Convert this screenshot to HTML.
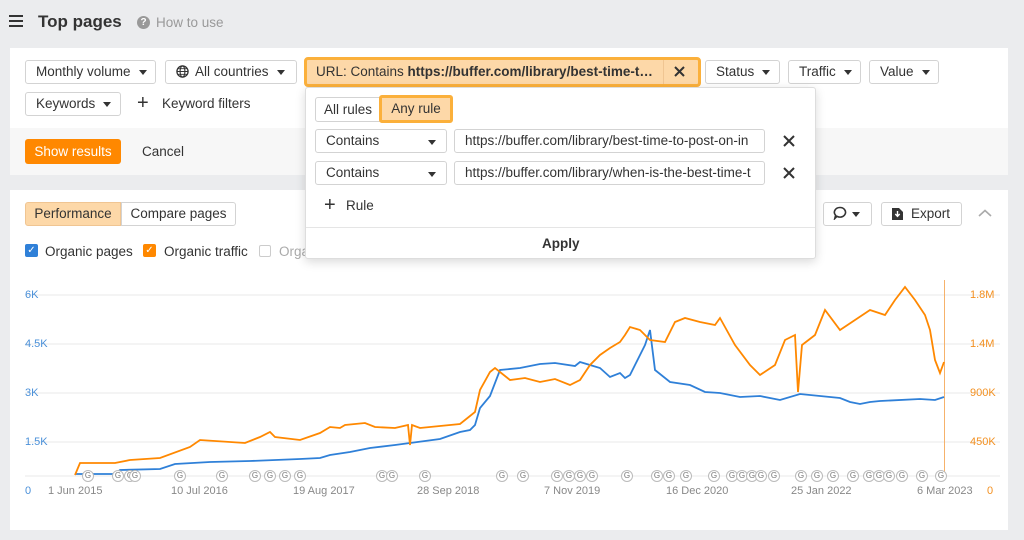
<!DOCTYPE html>
<html><head><meta charset="utf-8"><style>
*{box-sizing:border-box;margin:0;padding:0}
body{width:1024px;height:540px;background:#ebecee;font-family:"Liberation Sans",sans-serif;color:#333;position:relative;overflow:hidden;font-size:13px}
.a{position:absolute}
.btn{position:absolute;height:24px;border:1px solid #d3d3d3;border-radius:3px;background:#fff;font-size:13.5px;line-height:22px;padding-left:10px;color:#333}
.car{display:inline-block;width:0;height:0;border-left:4px solid transparent;border-right:4px solid transparent;border-top:5px solid #333;vertical-align:middle;margin-left:8px}
.g{position:absolute;top:470px;width:12px;height:12px;border:1px solid #bbb;border-radius:50%;background:#fff;font-size:8px;line-height:10px;text-align:center;color:#777}
.yl{position:absolute;font-size:11px;color:#4a90d9}
.yr{position:absolute;font-size:11px;color:#f39020}
.xl{position:absolute;top:485px;font-size:11px;color:#888}
.x{position:absolute}
</style></head><body>
<div class="a" style="left:9px;top:15px;width:14px;height:2px;background:#333;box-shadow:0 5px 0 #333,0 10px 0 #333"></div>
<div class="a" style="left:38px;top:12px;font-size:17px;font-weight:bold;color:#333">Top pages</div>
<div class="a" style="left:137px;top:16px;width:13px;height:13px;border-radius:50%;background:#999;color:#fff;font-size:10px;font-weight:bold;text-align:center;line-height:13px">?</div>
<div class="a" style="left:156px;top:15px;font-size:13.5px;color:#999">How to use</div>

<div class="a" style="left:10px;top:48px;width:998px;height:127px;background:#fff"></div>
<div class="a" style="left:10px;top:128px;width:998px;height:47px;background:#f7f7f7"></div>
<div class="btn" style="left:25px;top:60px;width:131px">Monthly volume<span class="car"></span></div>
<div class="btn" style="left:165px;top:60px;width:132px;padding-left:10px"><svg width="13" height="13" viewBox="0 0 14 14" style="vertical-align:-2px;margin-right:6px"><circle cx="7" cy="7" r="6" fill="none" stroke="#333" stroke-width="1.4"/><ellipse cx="7" cy="7" rx="2.6" ry="6" fill="none" stroke="#333" stroke-width="1.2"/><path d="M1 7h12M2 4h10M2 10h10" stroke="#333" stroke-width="1"/></svg>All countries<span class="car"></span></div>
<div class="a" style="left:304px;top:57px;width:397px;height:30px;border:3px solid #fbb03b;border-radius:4px;background:#fdd8a8"></div>
<div class="a" style="left:316px;top:64px;font-size:13.5px;white-space:nowrap">URL: Contains <b>https://buffer.com/library/best-time-t…</b></div>
<div class="a" style="left:663px;top:60px;width:1px;height:24px;background:#f0c592"></div>
<svg class="x" style="left:674px;top:66px" width="11" height="11"><path d="M1 1L10 10M10 1L1 10" stroke="#333" stroke-width="2"/></svg>
<div class="btn" style="left:705px;top:60px;width:75px">Status<span class="car"></span></div>
<div class="btn" style="left:788px;top:60px;width:73px">Traffic<span class="car"></span></div>
<div class="btn" style="left:869px;top:60px;width:70px">Value<span class="car"></span></div>
<div class="btn" style="left:25px;top:92px;width:96px">Keywords<span class="car"></span></div>
<div class="a" style="left:137px;top:92px;font-size:20px;line-height:22px">+</div>
<div class="a" style="left:162px;top:96px;font-size:13.5px">Keyword filters</div>
<div class="a" style="left:25px;top:139px;width:96px;height:25px;background:#ff8800;border-radius:3px;color:#fff;font-size:13.5px;line-height:25px;text-align:center">Show results</div>
<div class="a" style="left:142px;top:144px;font-size:13.5px">Cancel</div>

<div class="a" style="left:10px;top:190px;width:998px;height:340px;background:#fff"></div>
<div class="a" style="left:25px;top:202px;width:96px;height:24px;background:#fdd8a8;border:1px solid #f0c592;border-radius:3px 0 0 3px;font-size:13.5px;line-height:22px;text-align:center">Performance</div>
<div class="a" style="left:121px;top:202px;width:115px;height:24px;background:#fff;border:1px solid #d3d3d3;border-radius:0 3px 3px 0;font-size:13.5px;line-height:22px;text-align:center">Compare pages</div>
<div class="a" style="left:25px;top:244px;width:13px;height:13px;background:#2f80d8;border-radius:2px;color:#fff;font-size:10px;text-align:center;line-height:13px">✓</div>
<div class="a" style="left:45px;top:244px;font-size:13.5px">Organic pages</div>
<div class="a" style="left:143px;top:244px;width:13px;height:13px;background:#ff8800;border-radius:2px;color:#fff;font-size:10px;text-align:center;line-height:13px">✓</div>
<div class="a" style="left:164px;top:244px;font-size:13.5px">Organic traffic</div>
<div class="a" style="left:259px;top:245px;width:12px;height:12px;border:1px solid #ccc;border-radius:2px"></div>
<div class="a" style="left:279px;top:244px;font-size:13.5px;color:#aaa">Orga</div>
<div class="btn" style="left:823px;top:202px;width:49px;padding-left:9px"><svg width="14" height="14" viewBox="0 0 14 14" style="vertical-align:-2px"><path d="M7 1.5a5.5 4.8 0 1 1-3 8.8L1.8 12.5l.8-3.2A5.5 4.8 0 0 1 7 1.5z" fill="none" stroke="#333" stroke-width="1.6"/></svg><span class="car" style="margin-left:5px"></span></div>
<div class="btn" style="left:881px;top:202px;width:81px;padding-left:10px"><svg width="11" height="13" viewBox="0 0 11 13" style="vertical-align:-2px;margin-right:8px"><path d="M0 1h7l4 4v8H0z" fill="#333"/><path d="M5.5 4v5M3.3 7l2.2 2.3L7.7 7" stroke="#fff" stroke-width="1.4" fill="none"/></svg>Export</div>
<svg class="x" style="left:978px;top:209px" width="14" height="9"><path d="M1 7L7 1.5L13 7" stroke="#aaa" stroke-width="1.6" fill="none"/></svg>

<svg class="a" style="left:0;top:280px" width="1024" height="220">
<g stroke="#e8e8e8" stroke-width="1"><line x1="25" y1="15" x2="1000" y2="15"/><line x1="25" y1="64" x2="1000" y2="64"/><line x1="25" y1="113" x2="1000" y2="113"/><line x1="25" y1="162" x2="1000" y2="162"/><line x1="25" y1="196" x2="1000" y2="196"/></g>
<line x1="944.5" y1="0" x2="944.5" y2="196" stroke="#f6b26b" stroke-width="1"/>
<polyline fill="none" stroke="#2f80d8" stroke-width="1.8" points="75,194 115,194 120,190 160,189 175,184 210,182 250,181 300,179 320,178 330,175 350,172 370,168 395,165 410,163 440,159 460,152 470,150 475,145 480,128 490,116 500,90 520,88 540,84 555,83 575,86 580,82 590,85 600,88 610,97 620,93 625,98 630,95 645,65 650,50 655,90 670,102 690,105 705,112 720,113 740,117 760,116 780,120 800,114 820,116 840,118 850,122 860,124 870,122 880,121 920,119 935,120 944,117"/>
<polyline fill="none" stroke="#ff8800" stroke-width="1.8" points="75,195 80,183 115,183 130,180 160,178 190,167 200,160 245,163 260,157 270,152 275,157 300,160 320,153 330,147 340,148 345,145 365,143 375,147 395,148 408,145 410,165 412,145 420,148 440,146 460,144 470,136 475,132 480,110 490,92 495,88 510,100 525,98 540,102 555,99 570,105 580,100 590,85 600,75 610,68 620,62 625,55 630,47 640,50 650,60 665,62 675,42 685,38 700,42 715,45 720,38 735,65 750,85 760,95 775,85 785,60 795,55 798,112 802,65 815,55 825,30 840,50 855,40 870,30 885,35 895,20 905,7 915,20 925,35 930,50 935,80 940,93 944,82"/>
</svg>
<div class="yl" style="left:25px;top:289px">6K</div><div class="yl" style="left:25px;top:338px">4.5K</div><div class="yl" style="left:25px;top:387px">3K</div><div class="yl" style="left:25px;top:436px">1.5K</div><div class="yl" style="left:25px;top:485px">0</div>
<div class="yr" style="left:970px;top:289px">1.8M</div><div class="yr" style="left:970px;top:338px">1.4M</div><div class="yr" style="left:970px;top:387px">900K</div><div class="yr" style="left:970px;top:436px">450K</div><div class="yr" style="left:987px;top:485px">0</div>
<div class="xl" style="left:48px">1 Jun 2015</div><div class="xl" style="left:171px">10 Jul 2016</div><div class="xl" style="left:293px">19 Aug 2017</div><div class="xl" style="left:417px">28 Sep 2018</div><div class="xl" style="left:544px">7 Nov 2019</div><div class="xl" style="left:666px">16 Dec 2020</div><div class="xl" style="left:791px">25 Jan 2022</div><div class="xl" style="left:917px">6 Mar 2023</div>
<div class="g" style="left:82px">G</div><div class="g" style="left:112px">G</div><div class="g" style="left:124px">G</div><div class="g" style="left:129px">G</div><div class="g" style="left:174px">G</div><div class="g" style="left:216px">G</div><div class="g" style="left:249px">G</div><div class="g" style="left:264px">G</div><div class="g" style="left:279px">G</div><div class="g" style="left:294px">G</div><div class="g" style="left:376px">G</div><div class="g" style="left:386px">G</div><div class="g" style="left:419px">G</div><div class="g" style="left:496px">G</div><div class="g" style="left:517px">G</div><div class="g" style="left:551px">G</div><div class="g" style="left:563px">G</div><div class="g" style="left:574px">G</div><div class="g" style="left:586px">G</div><div class="g" style="left:621px">G</div><div class="g" style="left:651px">G</div><div class="g" style="left:663px">G</div><div class="g" style="left:680px">G</div><div class="g" style="left:708px">G</div><div class="g" style="left:726px">G</div><div class="g" style="left:736px">G</div><div class="g" style="left:746px">G</div><div class="g" style="left:755px">G</div><div class="g" style="left:768px">G</div><div class="g" style="left:795px">G</div><div class="g" style="left:811px">G</div><div class="g" style="left:827px">G</div><div class="g" style="left:847px">G</div><div class="g" style="left:863px">G</div><div class="g" style="left:873px">G</div><div class="g" style="left:883px">G</div><div class="g" style="left:896px">G</div><div class="g" style="left:916px">G</div><div class="g" style="left:935px">G</div>

<div class="a" style="left:305px;top:87px;width:511px;height:172px;background:#fff;border:1px solid #ddd;border-radius:3px;box-shadow:0 3px 10px rgba(0,0,0,.15)"></div>
<div class="a" style="left:315px;top:97px;width:66px;height:25px;border:1px solid #d3d3d3;border-radius:3px 0 0 3px;font-size:13.5px;line-height:23px;text-align:center">All rules</div>
<div class="a" style="left:379px;top:95px;width:74px;height:28px;border:3px solid #fbb03b;border-radius:3px;background:#fdd8a8;font-size:13.5px;line-height:22px;text-align:center">Any rule</div>
<div class="btn" style="left:315px;top:129px;width:132px">Contains<span class="car" style="position:absolute;right:10px;top:10px"></span></div>
<div class="btn" style="left:315px;top:161px;width:132px">Contains<span class="car" style="position:absolute;right:10px;top:10px"></span></div>
<div class="btn" style="left:454px;top:129px;width:311px;overflow:hidden;white-space:nowrap">https://buffer.com/library/best-time-to-post-on-in</div>
<div class="btn" style="left:454px;top:161px;width:311px;overflow:hidden;white-space:nowrap">https://buffer.com/library/when-is-the-best-time-t</div>
<svg class="x" style="left:783px;top:135px" width="12" height="12"><path d="M1 1L11 11M11 1L1 11" stroke="#333" stroke-width="2"/></svg>
<svg class="x" style="left:783px;top:167px" width="12" height="12"><path d="M1 1L11 11M11 1L1 11" stroke="#333" stroke-width="2"/></svg>
<div class="a" style="left:324px;top:194px;font-size:20px;line-height:22px">+</div>
<div class="a" style="left:346px;top:198px;font-size:13.5px">Rule</div>
<div class="a" style="left:306px;top:227px;width:509px;height:1px;background:#e5e5e5"></div>
<div class="a" style="left:542px;top:236px;font-size:13.5px;font-weight:bold">Apply</div>
</body></html>
